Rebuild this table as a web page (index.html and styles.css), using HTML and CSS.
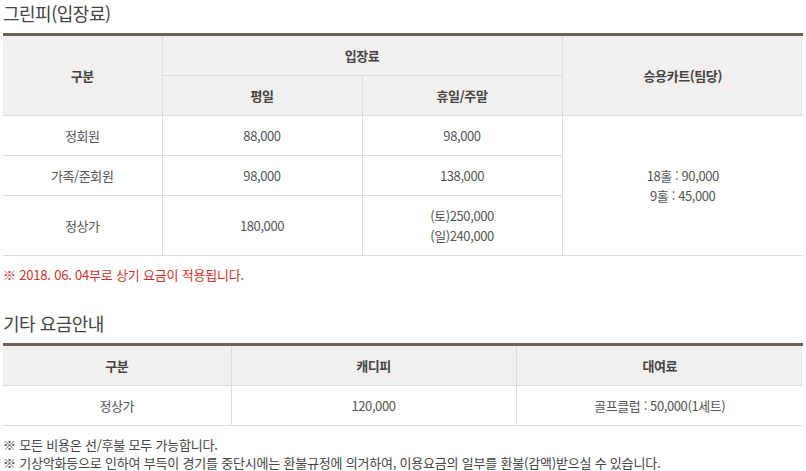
FILE: index.html
```html
<!DOCTYPE html>
<html lang="ko">
<head>
<meta charset="utf-8">
<link rel="stylesheet" href="styles.css">
</head>
<body>
<div class="page">
  <h2 class="title">그린피(입장료)</h2>
  <table class="fee fee-green">
    <colgroup>
      <col class="c1"><col class="c2"><col class="c3"><col class="c4">
    </colgroup>
    <thead>
      <tr>
        <th rowspan="2">구분</th>
        <th colspan="2">입장료</th>
        <th rowspan="2">승용카트(팀당)</th>
      </tr>
      <tr>
        <th>평일</th>
        <th>휴일/주말</th>
      </tr>
    </thead>
    <tbody>
      <tr>
        <td>정회원</td>
        <td>88,000</td>
        <td>98,000</td>
        <td rowspan="3">18홀 : 90,000<br>9홀 : 45,000</td>
      </tr>
      <tr>
        <td>가족/준회원</td>
        <td>98,000</td>
        <td>138,000</td>
      </tr>
      <tr class="tall">
        <td>정상가</td>
        <td>180,000</td>
        <td>(토)250,000<br>(일)240,000</td>
      </tr>
    </tbody>
  </table>
  <p class="note-red">※ 2018. 06. 04부로 상기 요금이 적용됩니다.</p>

  <h2 class="title title-second">기타 요금안내</h2>
  <table class="fee fee-etc">
    <colgroup>
      <col class="d1"><col class="d2"><col class="d3">
    </colgroup>
    <thead>
      <tr>
        <th>구분</th>
        <th>캐디피</th>
        <th>대여료</th>
      </tr>
    </thead>
    <tbody>
      <tr>
        <td>정상가</td>
        <td>120,000</td>
        <td>골프클럽 : 50,000(1세트)</td>
      </tr>
    </tbody>
  </table>
  <ul class="notes">
    <li>※ 모든 비용은 선/후불 모두 가능합니다.</li>
    <li>※ 기상악화등으로 인하여 부득이 경기를 중단시에는 환불규정에 의거하여, 이용요금의 일부를 환불(감액)받으실 수 있습니다.</li>
  </ul>
</div>
</body>
</html>
```

FILE: styles.css
```css
html, body {
  margin: 0;
  padding: 0;
  background: #fff;
}
body {
  font-family: "Noto Sans CJK KR", "Noto Sans", sans-serif;
  color: #555;
  font-size: 13px;
}
.page {
  width: 800px;
  padding: 0 3px;
}
.title {
  margin: 0 0 6px;
  font-size: 18px;
  line-height: 27px;
  font-weight: 400;
  color: #444;
  letter-spacing: -0.5px;
}
.title-second {
  margin-top: 26px;
}
.fee {
  width: 800px;
  border-collapse: collapse;
  table-layout: fixed;
  border-top: 3px solid #6f6055;
}
.fee th, .fee td {
  border: 1px solid #dcdcdc;
  height: 39px;
  padding: 0;
  text-align: center;
  vertical-align: middle;
  line-height: 20px;
  letter-spacing: -0.4px;
}
.fee tr > :first-child { border-left: 0; }
.fee tr > :last-child { border-right: 0; }
.fee-green tbody tr > td[rowspan] { border-right: 0; }
.fee th {
  background: #f2f0ee;
  color: #444;
  font-weight: 700;
}
.fee td {
  color: #555;
}
.fee .tall td { height: 59px; }
.c1 { width: 159px; }
.c2 { width: 200px; }
.c3 { width: 200px; }
.c4 { width: 241px; }
.d1 { width: 228px; }
.d2 { width: 285px; }
.d3 { width: 287px; }
.note-red {
  margin: 10px 0 0;
  color: #d3302b;
  font-size: 13px;
  line-height: 18px;
  letter-spacing: -0.2px;
}
.notes {
  list-style: none;
  margin: 10px 0 0;
  padding: 0;
  color: #444;
  font-size: 13px;
  line-height: 18px;
  letter-spacing: -0.2px;
}
```
